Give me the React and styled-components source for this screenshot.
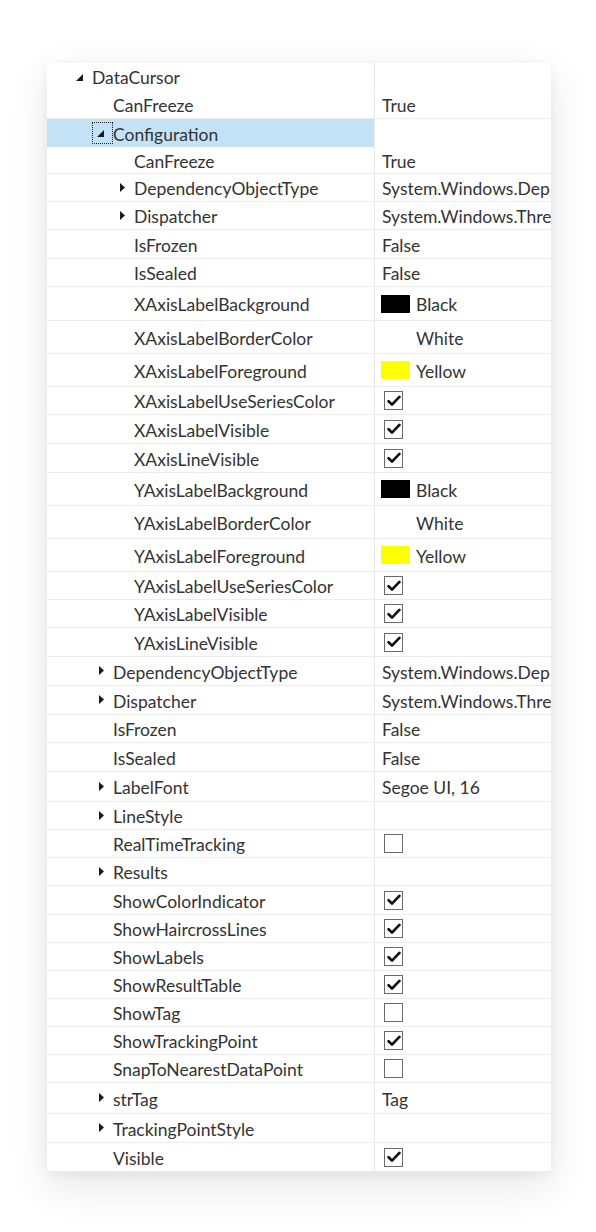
import styled, { createGlobalStyle } from "styled-components";

const GlobalStyle = createGlobalStyle`
  html, body {
    margin: 0;
    padding: 0;
    background: #ffffff;
  }
  body {
    font-family: Lato, "Open Sans", sans-serif;
  }
`;

// rows of the property grid, flattened
const rows = [
  { name: "DataCursor", level: 0, exp: "open", h: 28, header: true },
  { name: "CanFreeze", level: 1, h: 28, value: "True" },
  { name: "Configuration", level: 1, exp: "open", h: 28, header: true, selected: true },
  { name: "CanFreeze", level: 2, h: 27, value: "True" },
  { name: "DependencyObjectType", level: 2, exp: "closed", h: 28, value: "System.Windows.Dep" },
  { name: "Dispatcher", level: 2, exp: "closed", h: 28, value: "System.Windows.Thre" },
  { name: "IsFrozen", level: 2, h: 29, value: "False" },
  { name: "IsSealed", level: 2, h: 28, value: "False" },
  { name: "XAxisLabelBackground", level: 2, h: 34, color: "#000000", value: "Black" },
  { name: "XAxisLabelBorderColor", level: 2, h: 33, color: "#ffffff", value: "White" },
  { name: "XAxisLabelForeground", level: 2, h: 33, color: "#ffff00", value: "Yellow" },
  { name: "XAxisLabelUseSeriesColor", level: 2, h: 28, check: true },
  { name: "XAxisLabelVisible", level: 2, h: 29, check: true },
  { name: "XAxisLineVisible", level: 2, h: 29, check: true },
  { name: "YAxisLabelBackground", level: 2, h: 33, color: "#000000", value: "Black" },
  { name: "YAxisLabelBorderColor", level: 2, h: 33, color: "#ffffff", value: "White" },
  { name: "YAxisLabelForeground", level: 2, h: 33, color: "#ffff00", value: "Yellow" },
  { name: "YAxisLabelUseSeriesColor", level: 2, h: 28, check: true },
  { name: "YAxisLabelVisible", level: 2, h: 28, check: true },
  { name: "YAxisLineVisible", level: 2, h: 29, check: true },
  { name: "DependencyObjectType", level: 1, exp: "closed", h: 29, value: "System.Windows.Dep" },
  { name: "Dispatcher", level: 1, exp: "closed", h: 29, value: "System.Windows.Thre" },
  { name: "IsFrozen", level: 1, h: 28, value: "False" },
  { name: "IsSealed", level: 1, h: 29, value: "False" },
  { name: "LabelFont", level: 1, exp: "closed", h: 30, value: "Segoe UI, 16" },
  { name: "LineStyle", level: 1, exp: "closed", h: 28 },
  { name: "RealTimeTracking", level: 1, h: 28, check: false },
  { name: "Results", level: 1, exp: "closed", h: 28 },
  { name: "ShowColorIndicator", level: 1, h: 29, check: true },
  { name: "ShowHaircrossLines", level: 1, h: 28, check: true },
  { name: "ShowLabels", level: 1, h: 28, check: true },
  { name: "ShowResultTable", level: 1, h: 28, check: true },
  { name: "ShowTag", level: 1, h: 28, check: false },
  { name: "ShowTrackingPoint", level: 1, h: 28, check: true },
  { name: "SnapToNearestDataPoint", level: 1, h: 28, check: false },
  { name: "strTag", level: 1, exp: "closed", h: 31, value: "Tag" },
  { name: "TrackingPointStyle", level: 1, exp: "closed", h: 29 },
  { name: "Visible", level: 1, h: 29, check: true },
];

function Expander({ kind, focused }) {
  return (
    <Slot $focused={focused}>
      {kind === "open" && (
        <OpenArrow width="7" height="7" viewBox="0 0 7 7">
          <polygon points="7,0 7,7 0,7" fill="#1a1a1a" />
        </OpenArrow>
      )}
      {kind === "closed" && (
        <ClosedArrow width="5" height="9" viewBox="0 0 5 9">
          <polygon points="0,0 5,4.5 0,9" fill="#1a1a1a" />
        </ClosedArrow>
      )}
    </Slot>
  );
}

function CheckBox({ checked }) {
  return (
    <Box>
      {checked && (
        <svg width="14" height="12" viewBox="0 0 14 12">
          <path
            d="M1.6 6.3 L5 9.6 L12.4 1.9"
            fill="none"
            stroke="#111"
            strokeWidth="2.7"
            strokeLinecap="round"
            strokeLinejoin="round"
          />
        </svg>
      )}
    </Box>
  );
}

function Value({ row }) {
  if (row.check !== undefined) return <CheckBox checked={row.check} />;
  if (row.color)
    return (
      <>
        <Swatch $color={row.color} />
        <ValueText>{row.value}</ValueText>
      </>
    );
  return <ValueText>{row.value}</ValueText>;
}

export default function App() {
  return (
    <>
      <GlobalStyle />
      <Page>
        <Grid>
          {rows.map((row, i) => (
            <Row key={i} $h={row.h} $header={row.header}>
              <NameCell $level={row.level} $selected={row.selected}>
                <Expander kind={row.exp} focused={row.selected} />
                <Name>{row.name}</Name>
              </NameCell>
              <ValueCell>
                <Value row={row} />
              </ValueCell>
            </Row>
          ))}
        </Grid>
      </Page>
    </>
  );
}

const Page = styled.div`
  width: 596px;
  height: 1232px;
  padding: 63px 0 0 47px;
  box-sizing: border-box;
`;

const Grid = styled.div`
  width: 504px;
  background: #ffffff;
  display: flex;
  flex-direction: column;
  box-shadow: 0 14px 40px rgba(0, 0, 0, 0.1), 0 2px 10px rgba(0, 0, 0, 0.05);
`;

const Row = styled.div`
  display: grid;
  grid-template-columns: 327px 177px;
  height: ${(p) => p.$h}px;
  box-sizing: border-box;
  border-bottom: 1px solid ${(p) => (p.$header ? "transparent" : "#ececec")};
  color: #333333;
  font-size: 17.5px;
`;

const NameCell = styled.div`
  display: flex;
  align-items: center;
  padding-left: ${(p) => 24 + p.$level * 21}px;
  background: ${(p) => (p.$selected ? "#c4e2f5" : "transparent")};
  margin-bottom: ${(p) => (p.$selected ? "-1px" : "0")};
  overflow: hidden;
  white-space: nowrap;
`;

const Slot = styled.div`
  width: 21px;
  height: 22px;
  flex-shrink: 0;
  position: relative;
  box-sizing: border-box;
  border: 1px dotted ${(p) => (p.$focused ? "#222" : "transparent")};
`;

const OpenArrow = styled.svg`
  position: absolute;
  left: 4px;
  top: 7px;
`;

const ClosedArrow = styled.svg`
  position: absolute;
  left: 6px;
  top: 5px;
`;

const Name = styled.span`
  padding-top: 2px;
`;

const ValueCell = styled.div`
  display: flex;
  align-items: center;
  padding-left: 7px;
  border-left: 1px solid #e8e8e8;
  overflow: hidden;
  white-space: nowrap;
`;

const ValueText = styled.span`
  white-space: nowrap;
  padding-top: 2px;
`;

const Swatch = styled.span`
  display: inline-block;
  width: 29px;
  height: 18px;
  margin-left: -1px;
  margin-right: 6px;
  background: ${(p) => p.$color};
  flex-shrink: 0;
`;

const Box = styled.div`
  width: 19px;
  height: 19px;
  margin-left: 2px;
  box-sizing: border-box;
  border: 1px solid #6a6a6a;
  background: #fff;
  display: flex;
  align-items: center;
  justify-content: center;
`;
